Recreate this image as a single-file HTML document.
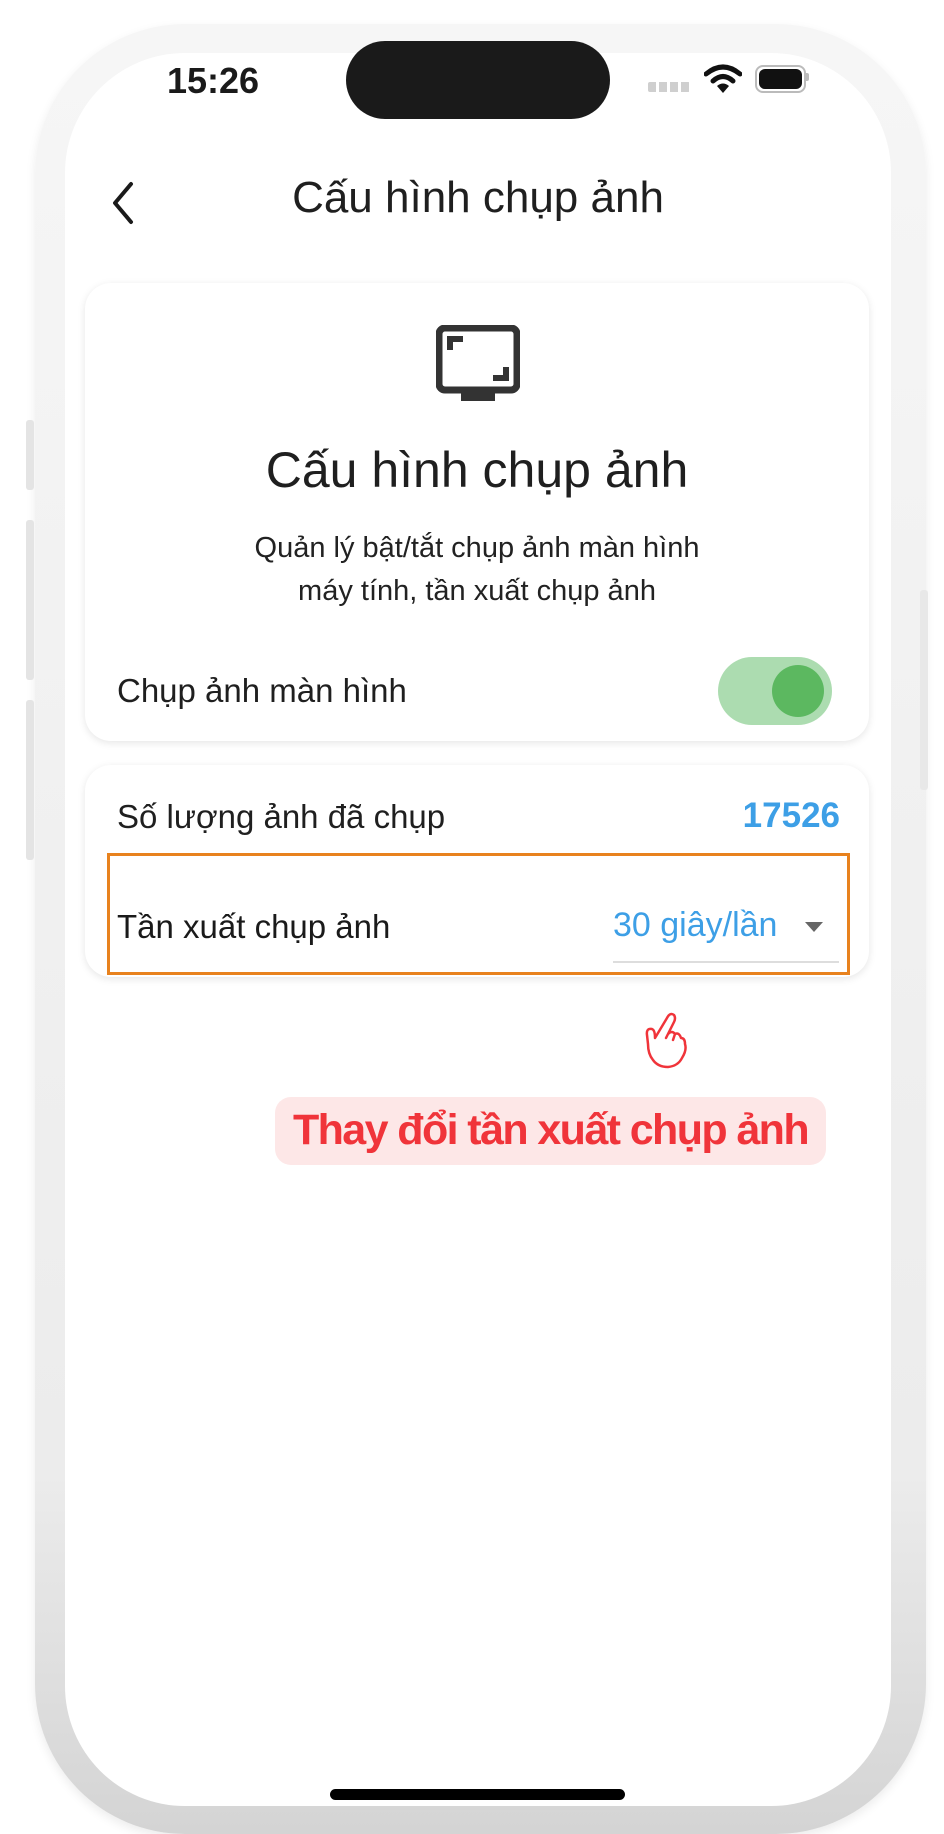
<!DOCTYPE html>
<html><head><meta charset="utf-8">
<style>
html,body{margin:0;padding:0;background:#fff;}
body{width:944px;height:1825px;position:relative;overflow:hidden;font-family:"Liberation Sans",sans-serif;color:#1f1f1f;}
.abs{position:absolute;}
.frame{left:35px;top:24px;width:891px;height:1810px;border-radius:150px;background:linear-gradient(#f6f6f6,#ececec 80%,#d4d4d4);box-shadow:0 4px 10px rgba(0,0,0,0.08);}
.screen{left:65px;top:53px;width:826px;height:1753px;border-radius:120px;background:#fff;}
.card{background:#fff;border-radius:26px;box-shadow:0 2px 8px rgba(0,0,0,0.10);}
.t{white-space:nowrap;}
</style></head><body>
<div class="abs frame"></div>
<div class="abs screen"></div>
<div class="abs" style="left:26px;top:420px;width:8px;height:70px;background:#e4e4e4;border-radius:3px"></div>
<div class="abs" style="left:26px;top:520px;width:8px;height:160px;background:#e4e4e4;border-radius:3px"></div>
<div class="abs" style="left:26px;top:700px;width:8px;height:160px;background:#e4e4e4;border-radius:3px"></div>
<div class="abs" style="left:920px;top:590px;width:8px;height:200px;background:#e8e8e8;border-radius:3px"></div>

<div class="abs t" style="left:167px;top:60px;font-size:36px;font-weight:bold;color:#1a1a1a;">15:26</div>
<div class="abs" style="left:346px;top:41px;width:264px;height:78px;border-radius:39px;background:#1a1a1a"></div>
<div class="abs" style="left:648px;top:82px;width:42px;height:10px;background:repeating-linear-gradient(90deg,#cfcfcf 0 8px,transparent 8px 11px);border-radius:2px"></div>
<svg class="abs" style="left:704px;top:64px" width="38" height="30" viewBox="0 0 38 30"><path d="M2 10 Q19 -4 36 10" stroke="#111" stroke-width="5" fill="none" stroke-linecap="round"/><path d="M9 17 Q19 8 29 17" stroke="#111" stroke-width="5" fill="none" stroke-linecap="round"/><path d="M13 22 L19 29 L25 22 Q19 17 13 22Z" fill="#111"/></svg>
<div class="abs" style="left:755px;top:65px;width:47px;height:24px;border:2px solid #bbb;border-radius:8px;"></div>
<div class="abs" style="left:759px;top:69px;width:43px;height:20px;background:#111;border-radius:6px"></div>
<div class="abs" style="left:806px;top:73px;width:3px;height:8px;background:#bbb;border-radius:0 2px 2px 0"></div>

<svg class="abs" style="left:108px;top:180px" width="30" height="46" viewBox="0 0 30 46"><path d="M23 4 L7 23 L23 42" stroke="#1a1a1a" stroke-width="4" fill="none" stroke-linecap="round" stroke-linejoin="round"/></svg>
<div class="abs t" style="left:0;width:956px;text-align:center;top:173px;font-size:44px;color:#1f1f1f">Cấu hình chụp ảnh</div>

<div class="abs card" style="left:85px;top:283px;width:784px;height:458px"></div>
<svg class="abs" style="left:436px;top:325px" width="84" height="78" viewBox="0 0 84 78"><rect x="3" y="3" width="78" height="62" rx="6" fill="none" stroke="#333" stroke-width="7"/><path d="M14 25 V14 H27" stroke="#333" stroke-width="6" fill="none"/><path d="M70 42 V53 H57" stroke="#333" stroke-width="6" fill="none"/><rect x="25" y="66" width="34" height="10" fill="#333"/></svg>
<div class="abs t" style="left:85px;width:784px;text-align:center;top:441px;font-size:50px;color:#1f1f1f">Cấu hình chụp ảnh</div>
<div class="abs" style="left:85px;width:784px;text-align:center;top:527px;font-size:29px;line-height:43px;color:#222">Quản lý bật/tắt chụp ảnh màn hình<br>máy tính, tần xuất chụp ảnh</div>
<div class="abs t" style="left:117px;top:672px;font-size:33px;color:#1f1f1f">Chụp ảnh màn hình</div>
<div class="abs" style="left:718px;top:657px;width:114px;height:68px;border-radius:34px;background:#acdcb0"></div>
<div class="abs" style="left:772px;top:665px;width:52px;height:52px;border-radius:50%;background:#5cb860"></div>

<div class="abs card" style="left:85px;top:765px;width:784px;height:212px"></div>
<div class="abs t" style="left:117px;top:798px;font-size:33px;color:#1f1f1f">Số lượng ảnh đã chụp</div>
<div class="abs t" style="right:104px;top:796px;font-size:35px;font-weight:bold;color:#3d9fe6">17526</div>
<div class="abs" style="left:107px;top:853px;width:737px;height:116px;border:3px solid #e8821e"></div>
<div class="abs t" style="left:117px;top:908px;font-size:33px;color:#1a1a1a">Tần xuất chụp ảnh</div>
<div class="abs t" style="left:613px;top:906px;font-size:34px;color:#3d9fe6">30 giây/lần</div>
<svg class="abs" style="left:804px;top:921px" width="20" height="12" viewBox="0 0 20 12"><path d="M1 1 H19 L10 11Z" fill="#666"/></svg>
<div class="abs" style="left:613px;top:961px;width:226px;height:2px;background:#ddd"></div>

<svg class="abs" style="left:640px;top:1008px" width="60" height="66" viewBox="0 0 60 62"><path d="M15 28 L27 8 Q30 2 34 5 Q36 8 34 12 L28 24 Q32 20 35 24 Q39 22 41 28 Q45 28 45 34 Q47 40 42 48 Q38 56 28 57 Q18 57 13 50 Q8 44 8 34 L7 25 Q6 18 12 19 Q15 20 15 28 Z M28 24 L26 28 M35 24 L33 30" stroke="#f0343a" stroke-width="2.5" fill="none" stroke-linejoin="round" stroke-linecap="round"/></svg>

<div class="abs" style="left:275px;top:1097px;width:551px;height:68px;border-radius:16px;background:#fde7e7"></div>
<div class="abs t" style="left:275px;width:551px;text-align:center;top:1106px;font-size:43px;font-weight:bold;color:#f0343a;letter-spacing:-1.6px">Thay đổi tần xuất chụp ảnh</div>

<div class="abs" style="left:330px;top:1789px;width:295px;height:11px;border-radius:6px;background:#000"></div>
</body></html>
